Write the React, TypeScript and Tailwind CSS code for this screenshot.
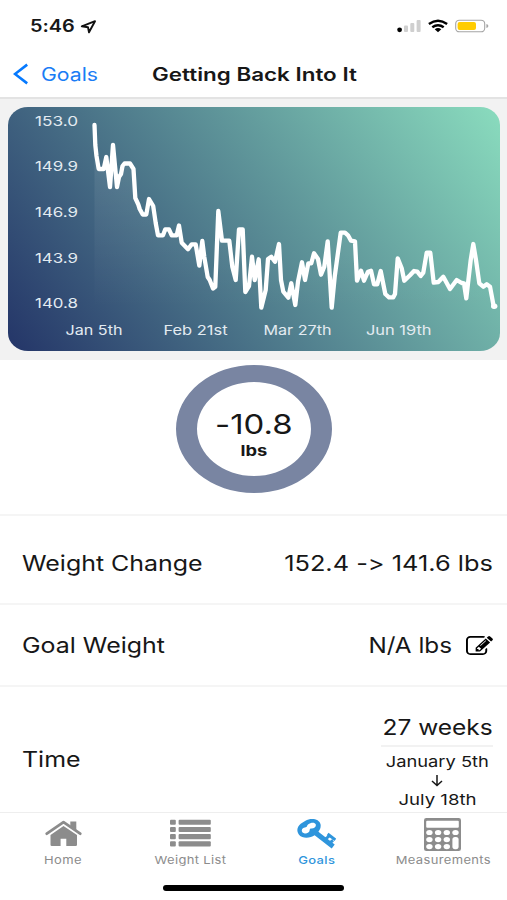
import type { ReactNode } from 'react'
import clsx from 'clsx'

const yLabels = [
  { text: '153.0', y: 125.8 },
  { text: '149.9', y: 171.4 },
  { text: '146.9', y: 217 },
  { text: '143.9', y: 262.7 },
  { text: '140.8', y: 308.3 },
]

const xLabels = [
  { text: 'Jan 5th', x: 65.5, width: 57 },
  { text: 'Feb 21st', x: 163.5, width: 64 },
  { text: 'Mar 27th', x: 263.5, width: 68 },
  { text: 'Jun 19th', x: 366, width: 65.5 },
]

const line =
  '94.5,125 95.3,145 96.5,156 98.7,169 103.7,169 106.3,157 110,187 113,145 117,187 119,177 121,174 122.5,166 124.5,163.5 130,163.5 133.5,169 135.3,198 138.3,204.5 139.7,209 142.7,214.5 146.3,214.5 149,199 153.2,206 155.7,223 158,235.3 163,235.3 165.3,229.3 169,229.3 171.7,235.3 176.7,235.3 179,225.5 181.7,242.7 188,249.3 191.7,244.3 195.7,244.3 199.3,265.7 202.3,241 204.3,257 207.7,277 209.7,280 213,288.5 215.3,286.7 218.3,211 222,240.7 229.3,240.7 232.3,266.7 235.7,280 239,229.3 242.7,229.3 245.3,292 249,286 252,256.7 254.7,280 258.7,259.3 261.3,307.7 265.7,290 268,259 271.3,256.7 275,261.7 279,244 281,280 283.3,291.7 288.3,297.7 291.3,283.3 295.3,305 298,281.7 302,262.3 305,280 308.3,263.3 311.3,263.3 314,253.3 318,259 321,274.7 324.3,266.7 327.7,241.3 331.7,307.7 334.7,276.7 340.7,232.7 345,232.7 348,235.3 351,240.7 355,241.3 357,280.7 361,270.7 364,280.7 368,271.7 371,270.7 374,284.3 377.3,284.3 380.7,271 385.3,294 389,297.3 393.3,297.3 395,294 397.7,258.3 401.7,268.3 404.3,280.7 410,275.3 414,271 417.3,271.7 420.7,276 423.3,272.7 426.7,252.7 430.3,252.7 433.7,282.7 438.3,282 443.3,276.7 450,289 456.7,280 461.7,283 464,283.3 466.3,298.3 470.7,260 473.3,244 476,260 479.3,283.3 483.3,286.7 486.7,284.3 490,286.7 493.7,306.3'

// Widened text, anchored to the side it is aligned with
function Wide({
  children,
  className = 'scale-x-[1.2]',
}: {
  children: ReactNode
  className?: string
}) {
  return (
    <span className={clsx('inline-block whitespace-nowrap', className)}>
      {children}
    </span>
  )
}

function StatusBar() {
  return (
    <div className="flex h-[52px] items-center justify-between pl-[30px] pr-[18px]">
      <div className="flex items-center pt-0.5">
        <Wide className="w-[50px] origin-left scale-x-[1.17] text-[17px] font-semibold">
          5:46
        </Wide>
        <svg width="17" height="14" viewBox="0 0 17 14" fill="none">
          <path
            d="M1.8 6.3 15 1.2 9 12.3 8 7.2Z"
            stroke="#111"
            strokeWidth="1.9"
            strokeLinejoin="round"
          />
        </svg>
      </div>
      <div className="flex items-center">
        <svg width="24" height="14" viewBox="0 0 24 14">
          <circle cx="2.6" cy="10.8" r="2.4" />
          <g fill="#cfcfcf">
            <rect x="7" y="6.5" width="4" height="6.5" rx="1" />
            <rect x="13.3" y="4" width="4" height="9" rx="1" />
            <rect x="19.6" y="1" width="4" height="12" rx="1" />
          </g>
        </svg>
        <svg width="20" height="14" viewBox="0 0 20 14" className="ml-[7px]">
          <g fill="none" stroke="#000" strokeWidth="2.4">
            <path d="M.9 5Q10-1.5 19.1 5" />
            <path d="M4.3 8.3Q10 4 15.7 8.3" />
          </g>
          <path d="M6.7 10.2Q10 7.9 13.3 10.2L10 13.2Z" />
        </svg>
        <svg width="34" height="14" viewBox="0 0 34 14" className="ml-[7px]">
          <rect
            x=".7"
            y="1.2"
            width="29"
            height="11.6"
            rx="3.6"
            fill="none"
            stroke="#a5a5a5"
            strokeWidth="1.1"
          />
          <rect x="2.6" y="3" width="18.4" height="8" rx="2" fill="#ffcc00" />
          <path d="M31.4 5q2 .7 2 2t-2 2z" fill="#a5a5a5" />
        </svg>
      </div>
    </div>
  )
}

function NavBar() {
  return (
    <div className="grid h-[47px] grid-cols-[152px_1fr] items-center border-b-2 border-[#e3e3e3] pb-px">
      <div className="flex items-center pl-[13px] text-[#1a7df5]">
        <svg width="16" height="22" viewBox="0 0 16 22" fill="none">
          <path d="M14.2 1.6 2 11l12.2 9.4" stroke="#067aff" strokeWidth="2.6" />
        </svg>
        <Wide className="ml-[12px] origin-left scale-x-[1.18] text-[18px]">
          Goals
        </Wide>
      </div>
      <Wide className="origin-left scale-x-[1.245] justify-self-start text-[18px] font-semibold">
        Getting Back Into It
      </Wide>
    </div>
  )
}

function WeightChart() {
  return (
    <div className="h-[261px] bg-[#f2f2f2] px-2 pt-2">
      <svg
        width="492"
        height="244"
        viewBox="8 107 492 244"
        className="block"
        fontSize="13.3"
      >
        <defs>
          <linearGradient
            id="background"
            gradientUnits="userSpaceOnUse"
            x1="0"
            y1="244"
            x2="405"
            y2="0"
            gradientTransform="translate(8 107) scale(1.215 1)"
          >
            <stop offset="0" stopColor="#243568" />
            <stop offset="1" stopColor="#8adcbe" />
          </linearGradient>
          <linearGradient id="area" x1="0" y1="0" x2="0" y2="1">
            <stop offset="0" stopColor="#fff" stopOpacity=".1" />
            <stop offset="1" stopColor="#fff" stopOpacity="0" />
          </linearGradient>
        </defs>
        <rect
          x="8"
          y="107"
          width="492"
          height="244"
          rx="20"
          ry="18"
          fill="url(#background)"
        />
        <polygon points={`94.5,309 ${line} 493.7,309`} fill="url(#area)" />
        <polyline
          points={line}
          fill="none"
          stroke="#fff"
          strokeWidth="4.3"
          strokeLinecap="round"
          strokeLinejoin="round"
        />
        <ellipse cx="494.2" cy="306.3" rx="3.2" ry="2.7" fill="#fff" />
        <g fill="#e3ebf1">
          {yLabels.map(({ text, y }) => (
            <text
              key={text}
              x="35"
              y={y}
              textLength="43"
              lengthAdjust="spacingAndGlyphs"
            >
              {text}
            </text>
          ))}
          {xLabels.map(({ text, x, width }) => (
            <text
              key={text}
              x={x}
              y="334.8"
              textLength={width}
              lengthAdjust="spacingAndGlyphs"
            >
              {text}
            </text>
          ))}
        </g>
      </svg>
    </div>
  )
}

function ChangeRing() {
  return (
    <div className="flex h-[154px] justify-center pl-px pt-[5px]">
      <div className="flex h-[128px] w-[156px] flex-col items-center rounded-[50%] border-x-[21px] border-y-[17.5px] border-[#7985a2] pt-[25px]">
        <Wide className="scale-x-[1.22] text-[27px] leading-[36px]">-10.8</Wide>
        <Wide className="scale-x-[1.22] text-[15px] font-bold leading-[16px]">
          lbs
        </Wide>
      </div>
    </div>
  )
}

function Row({
  label,
  className,
  children,
}: {
  label: string
  className: string
  children: ReactNode
}) {
  return (
    <div
      className={clsx(
        'flex items-center justify-between border-t-2 border-[#f5f5f5] pl-[22px] pr-[14px] text-[21.5px]',
        className,
      )}
    >
      <Wide className="origin-left scale-x-[1.16]">{label}</Wide>
      {children}
    </div>
  )
}

function EditIcon() {
  return (
    <svg
      width="27"
      height="19"
      viewBox="0 128 1792 1408"
      preserveAspectRatio="none"
      className="ml-[14px]"
    >
      <path d="M888 1184l116-116-152-152-116 116v56h96v96h56zm440-720q-16-16-33 1l-350 350q-17 17-1 33t33-1l350-350q17-17 1-33zm80 594v190q0 119-84.5 203.5t-203.5 84.5h-832q-119 0-203.5-84.5t-84.5-203.5v-832q0-119 84.5-203.5t203.5-84.5h832q63 0 117 25 15 7 18 23 3 17-9 29l-49 49q-14 14-32 8-23-6-45-6h-832q-66 0-113 47t-47 113v832q0 66 47 113t113 47h832q66 0 113-47t47-113v-126q0-13 9-22l64-64q15-15 35-7t20 29zm-96-738l288 288-672 672h-288v-288zm444 132l-92 92-288-288 92-92q28-28 68-28t68 28l152 152q28 28 28 68t-28 68z" />
    </svg>
  )
}

function HomeIcon() {
  return (
    <svg width="37" height="33" viewBox="0 0 37 33" fill="currentColor">
      <path
        d="M1.8 15.7 18.5 4.1 35.2 15.7"
        fill="none"
        stroke="currentColor"
        strokeWidth="2.8"
        strokeLinecap="round"
        strokeLinejoin="round"
      />
      <path d="M25.3 3.5h6v9l-6-4Z" />
      <path d="M5.5 17 18.5 7.9 32 17v9.8q0 1.3-1.3 1.3H21.3v-7.3h-5.7v7.3H6.8Q5.5 28.1 5.5 26.8Z" />
    </svg>
  )
}

function ListIcon() {
  return (
    <svg width="41" height="33" viewBox="0 0 41 33" fill="currentColor">
      {[1.7, 8.9, 16.1, 23.3].map((y) => (
        <g key={y}>
          <rect x="0" y={y} width="5.8" height="5.1" rx="1" />
          <rect x="8.6" y={y} width="32.2" height="5.1" rx="1" />
        </g>
      ))}
    </svg>
  )
}

function KeyIcon() {
  return (
    <svg width="40" height="33" viewBox="0 0 40 33" fill="currentColor">
      <path
        fillRule="evenodd"
        d="M9.5 2.8C14.5-.3 23.6.6 24.6 6.6 25 9.3 24 11.8 22.4 13.7L38.7 26.5 35.7 30.4 18.6 17.2C14.5 20.3 6.5 20.8 3.2 17 .2 13.5.9 8.6 4.7 5.7 6.3 4.5 7.8 3.9 9.5 2.8ZM12 6.6C11 7.4 11.2 8.4 10.4 9 9.5 9.6 8.3 9 6.9 10.3 4.8 12.2 5.8 15.2 8.8 15.5 11.3 15.7 13.6 14.2 13.7 12 13.7 11 14.4 10.7 15.6 10.6 18.6 10.4 20.4 8.4 19.7 6.3 18.9 4 14.7 4.2 12 6.6Z"
      />
      <path
        d="M28.5 21.6 34.2 17.4M33 25.5 37 22.4M31.6 16 39.4 21.8"
        fill="none"
        stroke="currentColor"
        strokeWidth="3"
      />
    </svg>
  )
}

function CalculatorIcon() {
  return (
    <svg width="37" height="33" viewBox="0 0 37 33" className="mr-[3px]">
      <rect width="37" height="33" rx="2.3" fill="currentColor" />
      <g fill="#fff">
        <rect x="2.2" y="2.8" width="32.6" height="7" rx="1" />
        {[5.4, 14.1, 22.8].map((x) =>
          [14.5, 21.6, 28.6].map((y) => (
            <ellipse key={`${x}-${y}`} cx={x} cy={y} rx="3.2" ry="2.6" />
          )),
        )}
        <ellipse cx="31.5" cy="14.5" rx="3.2" ry="2.6" />
        <rect x="28.4" y="19" width="6.2" height="12.2" rx="2.6" />
      </g>
    </svg>
  )
}

const tabs = [
  { label: 'Home', icon: <HomeIcon /> },
  { label: 'Weight List', icon: <ListIcon /> },
  { label: 'Goals', icon: <KeyIcon />, active: true },
  { label: 'Measurements', icon: <CalculatorIcon /> },
]

function TabBar() {
  return (
    <div className="h-[88px] border-t border-[#eeeeee] bg-white">
      <div className="grid h-[72px] grid-cols-4">
        {tabs.map(({ label, icon, active }) => (
          <div
            key={label}
            className={clsx(
              'flex flex-col items-center pt-[5px]',
              active ? 'pr-px text-[#2f95dc]' : 'text-[#8c8c8c]',
            )}
          >
            {icon}
            <Wide
              className={clsx(
                'mt-px scale-x-[1.18] text-[11px] leading-4 tracking-[0.3px]',
                active && 'font-medium',
              )}
            >
              {label}
            </Wide>
          </div>
        ))}
      </div>
      <div className="mx-auto h-[6px] w-[181px] rounded-full bg-black" />
    </div>
  )
}

export default function App() {
  return (
    <div className="flex h-[900px] w-[507px] flex-col overflow-hidden bg-white font-[Inter,sans-serif] text-[#171717] [font-feature-settings:'calt'_0]">
      <StatusBar />
      <NavBar />
      <WeightChart />
      <ChangeRing />
      <Row label="Weight Change" className="h-[89px] pt-[8px]">
        <Wide className="origin-right scale-x-[1.18]">
          152.4 -&gt; 141.6 lbs
        </Wide>
      </Row>
      <Row label="Goal Weight" className="h-[82px] pt-px">
        <div className="flex items-center">
          <Wide className="origin-right scale-x-[1.13]">N/A lbs</Wide>
          <EditIcon />
        </div>
      </Row>
      <Row label="Time" className="h-[127px] pt-[19px]">
        <div className="flex w-[112px] flex-col items-center pt-0.5">
          <Wide className="origin-right scale-x-[1.14] self-end leading-[33px]">
            27 weeks
          </Wide>
          <div className="mb-[5px] mt-px h-[2px] w-full bg-[#f2f2f2]" />
          <Wide className="scale-x-[1.22] text-[15px] leading-[19px]">
            January 5th
          </Wide>
          <svg width="12" height="19" viewBox="0 0 12 19" fill="none">
            <path d="M6 4v10M1 10l5 4.5 5-4.5" stroke="#171717" strokeWidth="1.5" />
          </svg>
          <Wide className="scale-x-[1.24] text-[15px] leading-[19px]">
            July 18th
          </Wide>
        </div>
      </Row>
      <TabBar />
    </div>
  )
}
